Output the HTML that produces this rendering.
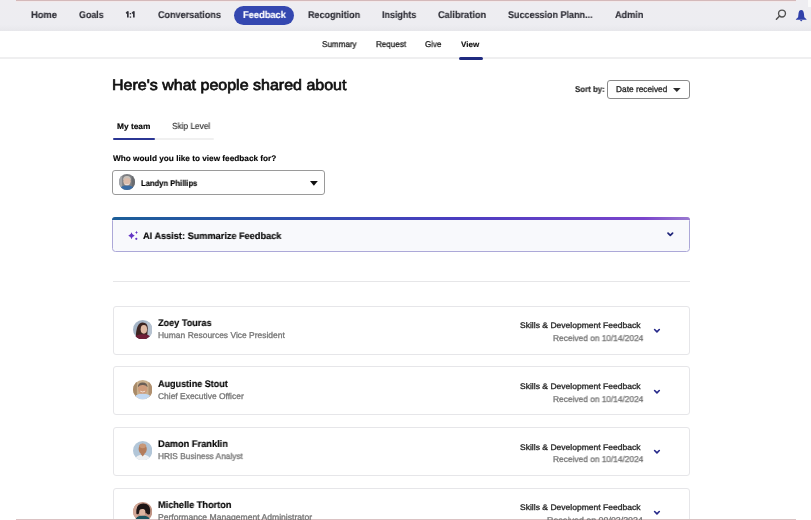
<!DOCTYPE html>
<html><head><meta charset="utf-8"><style>
*{margin:0;padding:0;box-sizing:border-box}
html,body{width:811px;height:520px;overflow:hidden;background:#fff;font-family:"Liberation Sans",sans-serif}
.t{position:absolute;white-space:nowrap;line-height:1;transform-origin:0 0;text-rendering:geometricPrecision;will-change:transform}
.b{font-weight:bold;-webkit-text-stroke:0.15px currentColor}
.r{-webkit-text-stroke:0.3px currentColor}
.a{position:absolute}
</style></head><body>
<div class="a" style="left:0;top:0;width:811px;height:31px;background:linear-gradient(180deg,#eeedf1 0,#ededf1 80%,#e7e7eb 100%)"></div>
<div class="a" style="left:16px;top:0;width:780px;height:1px;background:#d4b9ba"></div>
<div class="a" style="left:16px;top:1px;width:780px;height:1px;background:#f3e9ea"></div>
<div class="a" style="left:233.8px;top:5.5px;width:60.5px;height:19.2px;border-radius:10px;background:#3447b0"></div>
<div class="a" style="left:0;top:57px;width:811px;height:2px;background:#efeff0"></div>
<div class="a" style="left:458.5px;top:57px;width:24px;height:2.5px;border-radius:2px;background:#1f2a80"></div>
<svg class="a" style="left:774px;top:8px" width="14" height="14" viewBox="0 0 14 14"><circle cx="8.0" cy="5.5" r="3.45" fill="none" stroke="#505050" stroke-width="1.35"/><line x1="5.6" y1="7.9" x2="2.4" y2="11.2" stroke="#505050" stroke-width="1.5" stroke-linecap="round"/></svg>
<svg class="a" style="left:795px;top:9px" width="13" height="13" viewBox="0 0 13 13"><path d="M6.2 0.9C4.4 0.9 3.7 2.6 3.5 4.6L3.1 8.3L0.9 10.2V10.7H11.5V10.2L9.3 8.3L8.9 4.6C8.7 2.6 8 0.9 6.2 0.9z M4.9 10.9L6.2 12.5L7.5 10.9z" fill="#3040aa"/></svg>
<div class="a" style="left:607.2px;top:80.1px;width:82.5px;height:18.6px;border:1px solid #8a8a8a;border-radius:3px"></div>
<svg class="a" style="left:673.3px;top:87.8px" width="8" height="5" viewBox="0 0 8 5"><path d="M0 0.1h7.6L3.8 3.9z" fill="#2a2a2a"/></svg>
<div class="a" style="left:112.7px;top:138px;width:101px;height:2.4px;background:#f0f0f0;border-radius:2px"></div>
<div class="a" style="left:112.7px;top:138px;width:42px;height:2.4px;background:#2b3694;border-radius:2px"></div>
<div class="a" style="left:112.3px;top:170.4px;width:212.7px;height:24.2px;border:1px solid #9a9a9a;border-radius:3px"></div>
<svg class="a" style="left:310px;top:181px" width="8" height="5" viewBox="0 0 8 5"><path d="M0 0h7.8L3.9 4.8z" fill="#111"/></svg>
<div class="a" style="left:112.4px;top:217px;width:577.4px;height:35.4px;border:1.3px solid #aca8d8;border-radius:3.5px;background:#f8f9fc"></div>
<div class="a" style="left:112.4px;top:217px;width:577.4px;height:3px;border-radius:3px 3px 0 0;background:linear-gradient(90deg,#1b5e98,#2f4fae 30%,#4a3cc0 60%,#7a44cc 92%,#9a7ad0)"></div>
<svg class="a" style="left:127px;top:229px" width="12" height="12" viewBox="0 0 12 12"><path d="M4.5 3.3Q5 6 7.7 6.8Q5 7.6 4.5 10.3Q4 7.6 1.3 6.8Q4 6 4.5 3.3z" fill="#6233c4"/><path d="M9.5 1.8Q9.7 3.3 11 3.5Q9.7 3.7 9.5 5.2Q9.3 3.7 8 3.5Q9.3 3.3 9.5 1.8z" fill="#6233c4"/><circle cx="9.3" cy="9.8" r="1.1" fill="#6233c4"/></svg>
<svg class="a" style="left:666px;top:231px" width="9" height="7" viewBox="0 0 9 7"><path d="M2.0 2.1L4.3 4.4L6.6 2.1" fill="none" stroke="#20267a" stroke-width="1.7" stroke-linecap="round" stroke-linejoin="round"/></svg>
<div class="a" style="left:112.8px;top:281px;width:577px;height:1px;background:#e6e6e8"></div>
<div class="a" style="left:112.7px;top:305.80px;width:577px;height:49px;border:1.3px solid #e6e6e9;border-radius:3px"></div>
<svg class="a" style="left:132.6px;top:319.50px" width="19.4" height="19.4" viewBox="0 0 20 20"><defs><clipPath id="c0"><circle cx="10" cy="10" r="10"/></clipPath></defs><g clip-path="url(#c0)"><rect width="20" height="20" fill="#a4b4c6"/><rect x="14" width="6" height="20" fill="#b6c2d0"/><path d="M3 20 Q2.5 3 10 2.6 Q15.5 2.8 15.2 9 L14.5 20z" fill="#3c2420"/><ellipse cx="11.2" cy="9.6" rx="3.3" ry="4.5" fill="#e0baa4"/><path d="M0 20 Q2 14.6 10 14.6 Q18 14.6 20 20z" fill="#701e38"/></g></svg>
<svg class="a" style="left:653px;top:328.0px" width="8" height="6" viewBox="0 0 8 6"><path d="M1.6 1.5L3.95 3.85L6.3 1.5" fill="none" stroke="#26298a" stroke-width="1.6" stroke-linecap="round" stroke-linejoin="round"/></svg>
<div class="a" style="left:112.7px;top:366.47px;width:577px;height:49px;border:1.3px solid #e6e6e9;border-radius:3px"></div>
<svg class="a" style="left:132.6px;top:380.17px" width="19.4" height="19.4" viewBox="0 0 20 20"><defs><clipPath id="c1"><circle cx="10" cy="10" r="10"/></clipPath></defs><g clip-path="url(#c1)"><rect width="20" height="20" fill="#c9b08e"/><rect width="4" height="20" fill="#a88a68"/><rect x="16" width="4" height="20" fill="#b09070"/><ellipse cx="10" cy="9" rx="4.8" ry="5.6" fill="#cf9c7c"/><path d="M5 7.5 Q5 2.6 10 2.6 Q15 2.6 15 7.5 Q13 5 10 5.2 Q7 5 5 7.5z" fill="#6a5e56"/><path d="M7.5 11.5 Q10 13.2 12.5 11.5" stroke="#f0e0d8" stroke-width="1" fill="none"/><path d="M0 20 Q1.5 14.2 10 14.2 Q18.5 14.2 20 20z" fill="#c2d8f2"/></g></svg>
<svg class="a" style="left:653px;top:388.7px" width="8" height="6" viewBox="0 0 8 6"><path d="M1.6 1.5L3.95 3.85L6.3 1.5" fill="none" stroke="#26298a" stroke-width="1.6" stroke-linecap="round" stroke-linejoin="round"/></svg>
<div class="a" style="left:112.7px;top:427.14px;width:577px;height:49px;border:1.3px solid #e6e6e9;border-radius:3px"></div>
<svg class="a" style="left:132.6px;top:440.84px" width="19.4" height="19.4" viewBox="0 0 20 20"><defs><clipPath id="c2"><circle cx="10" cy="10" r="10"/></clipPath></defs><g clip-path="url(#c2)"><rect width="20" height="20" fill="#b2c6d8"/><ellipse cx="10" cy="8.2" rx="4.2" ry="5.4" fill="#b47c5a"/><ellipse cx="10" cy="5" rx="3.4" ry="2.4" fill="#c89878"/><path d="M1.5 20 Q3 14.2 10 14.2 Q17 14.2 18.5 20z" fill="#eef0f2"/><path d="M8 13.4 L10 16 L12 13.4z" fill="#b47c5a"/></g></svg>
<svg class="a" style="left:653px;top:449.3px" width="8" height="6" viewBox="0 0 8 6"><path d="M1.6 1.5L3.95 3.85L6.3 1.5" fill="none" stroke="#26298a" stroke-width="1.6" stroke-linecap="round" stroke-linejoin="round"/></svg>
<div class="a" style="left:112.7px;top:487.81px;width:577px;height:49px;border:1.3px solid #e6e6e9;border-radius:3px"></div>
<svg class="a" style="left:132.6px;top:501.51px" width="19.4" height="19.4" viewBox="0 0 20 20"><defs><clipPath id="c3"><circle cx="10" cy="10" r="10"/></clipPath></defs><g clip-path="url(#c3)"><rect width="20" height="20" fill="#c09484"/><rect x="0" width="5" height="20" fill="#d2a898"/><path d="M3.5 12 Q2.5 1.2 11 1.5 Q19 2 17.5 12 Q15.5 14 14 11.5 L6.5 11 Q5 13.5 3.5 12z" fill="#1e1616"/><ellipse cx="9.6" cy="10.6" rx="3.2" ry="3.9" fill="#dcb4a0"/><path d="M5.8 8.6 Q6.5 5 10.5 5.2 Q14 5.6 14 9 Q12 7 10 7.3 Q8 7.2 5.8 8.6z" fill="#1e1616"/><path d="M1.5 20 Q3 14 10 14.2 Q17 14 18.5 20z" fill="#1a5460"/></g></svg>
<svg class="a" style="left:653px;top:510.0px" width="8" height="6" viewBox="0 0 8 6"><path d="M1.6 1.5L3.95 3.85L6.3 1.5" fill="none" stroke="#26298a" stroke-width="1.6" stroke-linecap="round" stroke-linejoin="round"/></svg>
<svg class="a" style="left:118.6px;top:174.3px" width="16" height="16" viewBox="0 0 20 20"><defs><clipPath id="c4"><circle cx="10" cy="10" r="10"/></clipPath></defs><g clip-path="url(#c4)"><rect width="20" height="20" fill="#7e8084"/><rect x="0" y="0" width="4" height="20" fill="#a4a6aa"/><rect x="16" y="0" width="4" height="20" fill="#6a6c70"/><ellipse cx="10" cy="9" rx="4.6" ry="5.8" fill="#dcbcaa"/><path d="M5 8 Q5 2.5 10 2.6 Q15 2.5 15 8 Q13 5 10 5 Q7 5 5 8z" fill="#c8c2bc"/><path d="M6.2 10.5 Q10 17.5 13.8 10.5 Q12 13 10 13 Q8 13 6.2 10.5z" fill="#eeeeee"/><path d="M0.5 20 Q2 14.5 10 14.5 Q18 14.5 19.5 20z" fill="#3a6ca4"/></g></svg>
<div class="a" style="left:808px;top:0;width:3px;height:7px;background:#fafafa"></div>
<div class="a" style="left:16px;top:519px;width:780px;height:1px;background:#dbc2c3"></div>
<svg class="a" style="left:125px;top:10px" width="11" height="9" viewBox="0 0 11 9"><path d="M1.2 3.3L2.9 1.7M2.85 1.3V7.6M7.2 3.3L8.9 1.7M8.85 1.3V7.6" stroke="#303038" stroke-width="1.65" fill="none" stroke-linecap="butt"/><rect x="4.75" y="3.0" width="1.4" height="1.3" fill="#303038"/><rect x="4.75" y="6.45" width="1.4" height="1.3" fill="#303038"/></svg>
<div id="t0" class="t b" style="left:30.60px;top:11.00px;font-size:9.82px;color:#303038;transform:scaleX(0.9549)">Home</div>
<div id="t1" class="t b" style="left:78.80px;top:11.00px;font-size:9.82px;color:#303038;transform:scaleX(0.9039)">Goals</div>
<div id="t2" class="t b" style="left:126.20px;top:11.00px;font-size:9.82px;color:#303038;transform:scaleX(0.8730);color:transparent;-webkit-text-stroke:0">1:1</div>
<div id="t3" class="t b" style="left:157.60px;top:11.00px;font-size:9.82px;color:#303038;transform:scaleX(0.9226)">Conversations</div>
<div id="t4" class="t b" style="left:242.80px;top:11.00px;font-size:9.82px;color:#ffffff;transform:scaleX(0.9467)">Feedback</div>
<div id="t5" class="t b" style="left:308.20px;top:11.00px;font-size:9.82px;color:#303038;transform:scaleX(0.9184)">Recognition</div>
<div id="t6" class="t b" style="left:382.20px;top:11.00px;font-size:9.82px;color:#303038;transform:scaleX(0.9077)">Insights</div>
<div id="t7" class="t b" style="left:437.60px;top:11.00px;font-size:9.82px;color:#303038;transform:scaleX(0.9398)">Calibration</div>
<div id="t8" class="t b" style="left:507.50px;top:11.00px;font-size:9.82px;color:#303038;transform:scaleX(0.9170)">Succession Plann...</div>
<div id="t9" class="t b" style="left:615.20px;top:11.00px;font-size:9.82px;color:#303038;transform:scaleX(0.9325)">Admin</div>
<div id="t10" class="t r" style="left:321.90px;top:40.00px;font-size:8.48px;color:#1e1e1e;transform:scaleX(0.9519)">Summary</div>
<div id="t11" class="t r" style="left:375.70px;top:40.00px;font-size:8.48px;color:#1e1e1e;transform:scaleX(0.9525)">Request</div>
<div id="t12" class="t r" style="left:424.90px;top:40.00px;font-size:8.48px;color:#1e1e1e;transform:scaleX(0.9391)">Give</div>
<div id="t13" class="t b" style="left:460.80px;top:41.00px;font-size:7.97px;color:#151515;transform:scaleX(1.0093)">View</div>
<div id="t14" class="t r" style="left:111.80px;top:78.00px;font-size:15.16px;color:#111111;transform:scaleX(1.0563);-webkit-text-stroke:0.7px #111">Here's what people shared about</div>
<div id="t15" class="t b" style="left:574.90px;top:85.00px;font-size:8.34px;color:#262626;transform:scaleX(0.9447)">Sort by:</div>
<div id="t16" class="t r" style="left:615.60px;top:85.00px;font-size:8.34px;color:#262626;transform:scaleX(0.9979)">Date received</div>
<div id="t17" class="t b" style="left:116.90px;top:123.00px;font-size:8.08px;color:#050505;transform:scaleX(1.0312)">My team</div>
<div id="t18" class="t r" style="left:172.20px;top:122.00px;font-size:8.86px;color:#262626;transform:scaleX(0.9363);-webkit-text-stroke:0.12px #333">Skip Level</div>
<div id="t19" class="t b" style="left:112.60px;top:155.00px;font-size:8.08px;color:#050505;transform:scaleX(1.0195)">Who would you like to view feedback for?</div>
<div id="t20" class="t b" style="left:140.70px;top:179.00px;font-size:8.43px;color:#050505;transform:scaleX(0.9054)">Landyn Phillips</div>
<div id="t21" class="t b" style="left:142.60px;top:231.00px;font-size:9.44px;color:#050505;transform:scaleX(0.9743)">AI Assist: Summarize Feedback</div>
<div id="t22" class="t b" style="left:157.50px;top:319.00px;font-size:9.59px;color:#050505;transform:scaleX(0.9520)">Zoey Touras</div>
<div id="t23" class="t r" style="left:157.50px;top:331.00px;font-size:8.34px;color:#767676;transform:scaleX(1.0161)">Human Resources Vice President</div>
<div id="t24" class="t r" style="left:520.10px;top:322.00px;font-size:8.15px;color:#262626;transform:scaleX(1.0516)">Skills &amp; Development Feedback</div>
<div id="t25" class="t r" style="left:552.50px;top:334.00px;font-size:8.43px;color:#767676;transform:scaleX(0.9904)">Received on 10/14/2024</div>
<div id="t26" class="t b" style="left:157.50px;top:380.00px;font-size:9.59px;color:#050505;transform:scaleX(0.9436)">Augustine Stout</div>
<div id="t27" class="t r" style="left:157.50px;top:392.00px;font-size:8.34px;color:#767676;transform:scaleX(1.0136)">Chief Executive Officer</div>
<div id="t28" class="t r" style="left:520.10px;top:383.00px;font-size:8.15px;color:#262626;transform:scaleX(1.0516)">Skills &amp; Development Feedback</div>
<div id="t29" class="t r" style="left:552.50px;top:395.00px;font-size:8.43px;color:#767676;transform:scaleX(0.9904)">Received on 10/14/2024</div>
<div id="t30" class="t b" style="left:157.50px;top:440.00px;font-size:9.59px;color:#050505;transform:scaleX(0.9654)">Damon Franklin</div>
<div id="t31" class="t r" style="left:157.50px;top:452.00px;font-size:8.34px;color:#767676;transform:scaleX(0.9955)">HRIS Business Analyst</div>
<div id="t32" class="t r" style="left:520.10px;top:444.00px;font-size:8.15px;color:#262626;transform:scaleX(1.0516)">Skills &amp; Development Feedback</div>
<div id="t33" class="t r" style="left:552.50px;top:455.00px;font-size:8.43px;color:#767676;transform:scaleX(0.9904)">Received on 10/14/2024</div>
<div id="t34" class="t b" style="left:157.50px;top:501.00px;font-size:9.59px;color:#050505;transform:scaleX(0.9580)">Michelle Thorton</div>
<div id="t35" class="t r" style="left:157.50px;top:513.00px;font-size:8.34px;color:#767676;transform:scaleX(1.0302)">Performance Management Administrator</div>
<div id="t36" class="t r" style="left:520.10px;top:504.00px;font-size:8.15px;color:#262626;transform:scaleX(1.0516)">Skills &amp; Development Feedback</div>
<div id="t37" class="t r" style="left:547.10px;top:516.00px;font-size:8.43px;color:#767676;transform:scaleX(1.0497)">Received on 09/02/2024</div>
</body></html>
